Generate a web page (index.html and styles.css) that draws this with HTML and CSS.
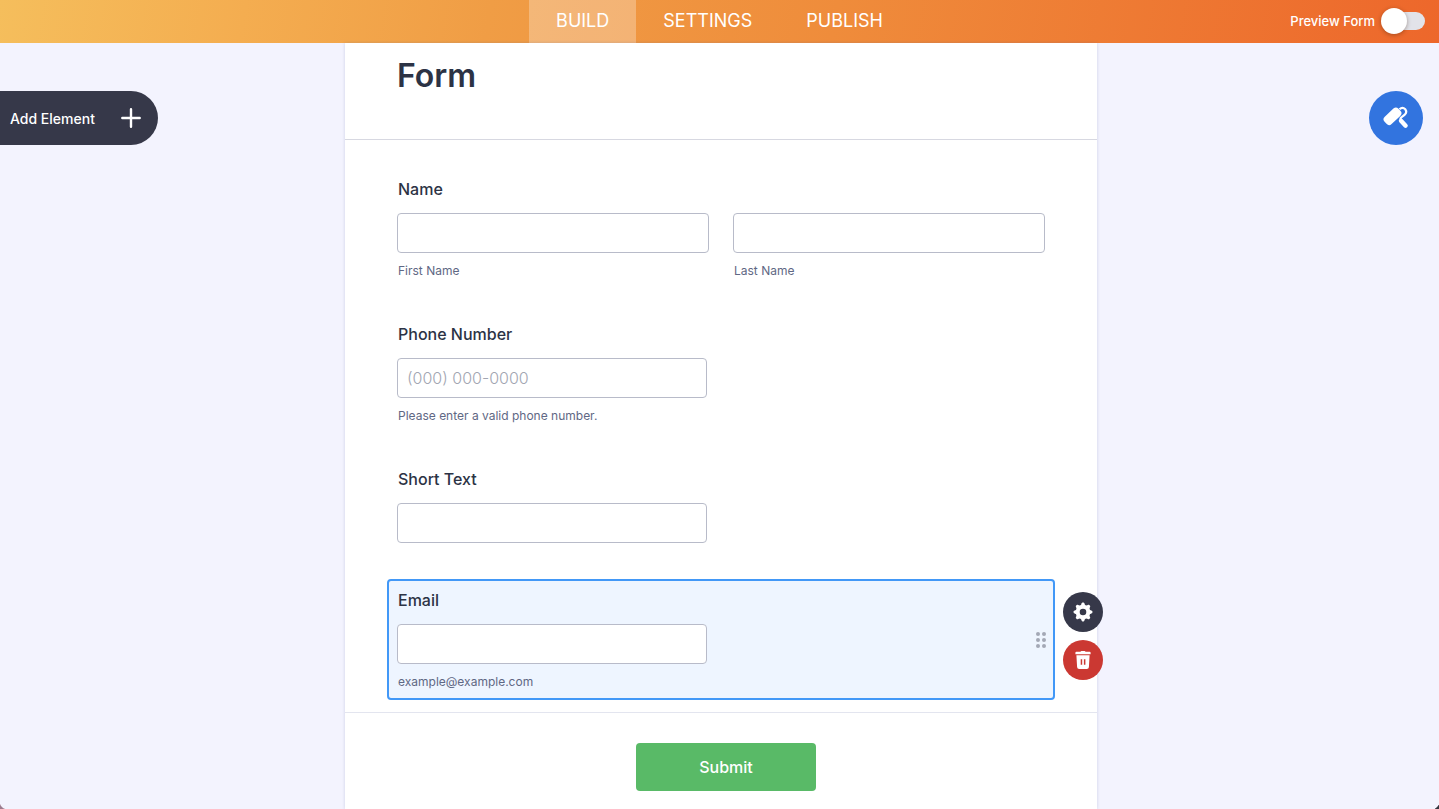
FILE: index.html
```
<!DOCTYPE html>
<html lang="en">
<head>
<meta charset="utf-8">
<meta name="viewport" content="width=device-width, initial-scale=1">
<title>Form Builder</title>
<link rel="stylesheet" href="styles.css">
</head>
<body>
<header class="topbar">
  <nav class="tabs">
    <a class="tab tab-active" href="#build">BUILD</a>
    <a class="tab" href="#settings">SETTINGS</a>
    <a class="tab" href="#publish">PUBLISH</a>
  </nav>
  <label class="preview">Preview Form <input class="toggle" type="checkbox" role="switch"></label>
</header>
<main class="workspace">
  <div class="side">
    <button class="add-element" type="button">Add Element
      <svg class="plus" viewBox="0 0 20 20" aria-hidden="true"><path d="M10 1.3v17.4M1.3 10h17.4" fill="none" stroke="#fff" stroke-width="2.4" stroke-linecap="round"/></svg>
    </button>
  </div>
  <div class="stage">
    <form class="card">
      <div class="card-head"><h1 class="title">Form</h1></div>
      <div class="fields">
        <fieldset class="field">
          <legend class="label">Name</legend>
          <div class="pair">
            <div><input class="input" id="first" type="text"><label class="hint" for="first">First Name</label></div>
            <div><input class="input" id="last" type="text"><label class="hint" for="last">Last Name</label></div>
          </div>
        </fieldset>
        <div class="field">
          <label class="label" for="phone">Phone Number</label>
          <input class="input input-short" id="phone" type="tel" placeholder="(000) 000-0000">
          <p class="hint">Please enter a valid phone number.</p>
        </div>
        <div class="field field-plain">
          <label class="label" for="short">Short Text</label>
          <input class="input input-short" id="short" type="text">
        </div>
        <div class="field field-selected">
          <label class="label" for="email">Email</label>
          <input class="input input-short" id="email" type="email">
          <p class="hint">example@example.com</p>
          <svg class="grip" viewBox="0 0 10 16" aria-hidden="true"><g fill="#a3a8b6"><circle cx="2" cy="2" r="2"/><circle cx="8" cy="2" r="2"/><circle cx="2" cy="8" r="2"/><circle cx="8" cy="8" r="2"/><circle cx="2" cy="14" r="2"/><circle cx="8" cy="14" r="2"/></g></svg>
          <div class="actions">
            <button class="action" type="button" aria-label="Properties">
              <svg class="action-icon" viewBox="0 0 20 20" aria-hidden="true"><g fill="#fff"><path fill-rule="evenodd" d="M10 2.700a7.300 7.300 0 1 0 0 14.600 7.300 7.300 0 0 0 0-14.600Zm0 4a3.300 3.300 0 1 1 0 6.600 3.300 3.300 0 0 1 0-6.600Z"/><path id="tooth" d="M7.600 4 8.700 1.200Q9 .6 9.500.6h1q.5 0 .8.6L12.400 4Z"/><use href="#tooth" transform="rotate(45 10 10)"/><use href="#tooth" transform="rotate(90 10 10)"/><use href="#tooth" transform="rotate(135 10 10)"/><use href="#tooth" transform="rotate(180 10 10)"/><use href="#tooth" transform="rotate(225 10 10)"/><use href="#tooth" transform="rotate(270 10 10)"/><use href="#tooth" transform="rotate(315 10 10)"/></g></svg>
            </button>
            <button class="action action-delete" type="button" aria-label="Delete">
              <svg class="action-icon" viewBox="0 0 20 20" aria-hidden="true"><path fill="#fff" d="M7.500 1.700Q7.700.9 8.500.9h3q.8 0 1 .8h4.100q1 0 1 1v1.500H2.400V2.700q0-1 1-1Z"/><path fill="#fff" fill-rule="evenodd" d="M3.400 5.300h13.200l-.7 11.700q-.1 2-2.100 2H6.200q-2 0-2.100-2ZM7.700 9.200v5.500h1.500V9.200Zm3.200 0v5.500h1.500V9.200Z"/></svg>
            </button>
          </div>
        </div>
      </div>
      <div class="card-foot"><button class="submit" type="button">Submit</button></div>
    </form>
  </div>
  <div class="side side-right">
    <button class="designer" type="button" aria-label="Form Designer">
      <svg class="roller" viewBox="0 0 26 26" aria-hidden="true"><rect x="0" y="6.300" width="19" height="10" rx="3.600" transform="rotate(-43 9.500 11.300)" fill="#fff"/><path d="M16.500 4.300Q19.500 1.500 22.300 4.300 24.500 7.300 21.500 9.800L18.200 12.500Q16.900 13.800 18.200 15.200" fill="none" stroke="#fff" stroke-width="2.200"/><path d="M18 15.800l4.600 4.900" stroke="#fff" stroke-width="4.400" stroke-linecap="round"/></svg>
    </button>
  </div>
</main>
</body>
</html>
```
FILE: styles.css
```
* { box-sizing: border-box; }
body {
  margin: 0;
  min-height: 100vh;
  display: flex;
  flex-direction: column;
  font-family: Inter, "Liberation Sans", sans-serif;
  color: #2c3345;
  background:
    radial-gradient(circle at 8px -2px, transparent 8px, #9c7c8e 9px) left bottom / 6px 6px no-repeat,
    radial-gradient(circle at -4px -4px, transparent 8px, #34353f 9px) right bottom / 4px 4px no-repeat,
    #f3f3fe;
}
button { border: 0; padding: 0; font-family: inherit; cursor: pointer; }
.topbar {
  height: 43px;
  display: grid;
  grid-template-columns: 1fr auto 1fr;
  background: linear-gradient(100deg, #f5be5c, #f4ad50 17%, #f09d45 34%, #ef8c3b 58%, #ed672b);
}
.tabs { grid-column: 2; display: flex; }
.tab {
  display: flex;
  align-items: center;
  padding: 0 27px 2px;
  font-size: 18px;
  color: #fff;
  text-decoration: none;
}
.tab-active { background: rgba(255, 255, 255, .28); }
.preview {
  justify-self: end;
  display: flex;
  align-items: center;
  gap: 7px;
  padding: 0 14px 2px 0;
  font-size: 13px;
  font-weight: 500;
  color: #fff;
}
.toggle {
  appearance: none;
  position: relative;
  width: 43px;
  height: 18px;
  margin: 0;
  border-radius: 9px;
  background: #e2e3e9;
}
.toggle::before {
  content: "";
  position: absolute;
  left: -1px;
  top: -4px;
  width: 26px;
  height: 26px;
  border-radius: 50%;
  background: #fff;
  box-shadow: 0 1px 4px rgba(60, 30, 10, .4);
}
.workspace {
  flex: 1;
  display: grid;
  grid-template-columns: 1fr minmax(0, 755px) 1fr;
}
.side { padding-top: 48px; }
.side-right { display: flex; justify-content: flex-end; padding-right: 16px; }
.add-element {
  display: flex;
  align-items: center;
  justify-content: space-between;
  width: 158px;
  height: 54px;
  padding: 0 17px 0 10px;
  border-radius: 0 27px 27px 0;
  background: #363849;
  color: #fff;
  font-size: 14px;
  font-weight: 500;
}
.plus { width: 20px; height: 20px; }
.designer {
  display: grid;
  place-items: center;
  width: 54px;
  height: 54px;
  border-radius: 50%;
  background: #3274df;
}
.roller { width: 26px; height: 26px; }
.stage { display: flex; padding-left: 3px; }
.card {
  flex: 1;
  min-width: 0;
  background: #fff;
  box-shadow: 0 0 3px rgba(87, 100, 160, .25);
}
.card-head { padding: 13px 52px 43px; border-bottom: 1px solid #d7d8e1; }
.title { margin: 0; font-size: 32px; line-height: 40px; font-weight: 600; }
.fields {
  display: flex;
  flex-direction: column;
  gap: 24px;
  padding: 28px 42px 12px;
}
.field {
  position: relative;
  min-width: 0;
  margin: 0;
  padding: 9px 8px 8px;
  border: 2px solid transparent;
  border-radius: 4px;
}
.field-plain { padding-bottom: 10px; }
.field-selected { border-color: #4298f7; background: #eef5ff; }
.label {
  display: block;
  float: left;
  width: 100%;
  margin-bottom: 14px;
  padding: 0 1px;
  font-size: 16px;
  line-height: 20px;
  font-weight: 500;
}
.pair {
  clear: both;
  display: grid;
  grid-template-columns: 1fr 1fr;
  gap: 24px;
}
.input {
  display: block;
  width: 100%;
  height: 40px;
  padding: 0 9px;
  border: 1px solid #b8bbc9;
  border-radius: 4px;
  background: #fff;
  font-family: inherit;
  font-size: 16px;
}
.input::placeholder { color: #a2a6b2; font-weight: 300; opacity: 1; }
.input-short { clear: both; max-width: 310px; }
.hint {
  display: block;
  margin: 10px 0 0;
  padding: 0 1px;
  font-size: 12px;
  line-height: 16px;
  color: #5f6884;
}
.grip {
  position: absolute;
  right: 7px;
  top: 51px;
  width: 10px;
  height: 16px;
}
.actions {
  position: absolute;
  right: -50px;
  top: 11px;
  display: grid;
  gap: 8px;
}
.action {
  display: grid;
  place-items: center;
  width: 40px;
  height: 40px;
  border-radius: 50%;
  background: #363849;
}
.action-delete { background: #cb3832; }
.action-icon { width: 20px; height: 20px; }
.card-foot {
  display: flex;
  justify-content: center;
  padding: 30px 0 18px 10px;
  border-top: 1px solid #e3e5ef;
}
.submit {
  width: 180px;
  height: 48px;
  border-radius: 4px;
  background: #59ba67;
  color: #fff;
  font-size: 16px;
  font-weight: 500;
}
```
